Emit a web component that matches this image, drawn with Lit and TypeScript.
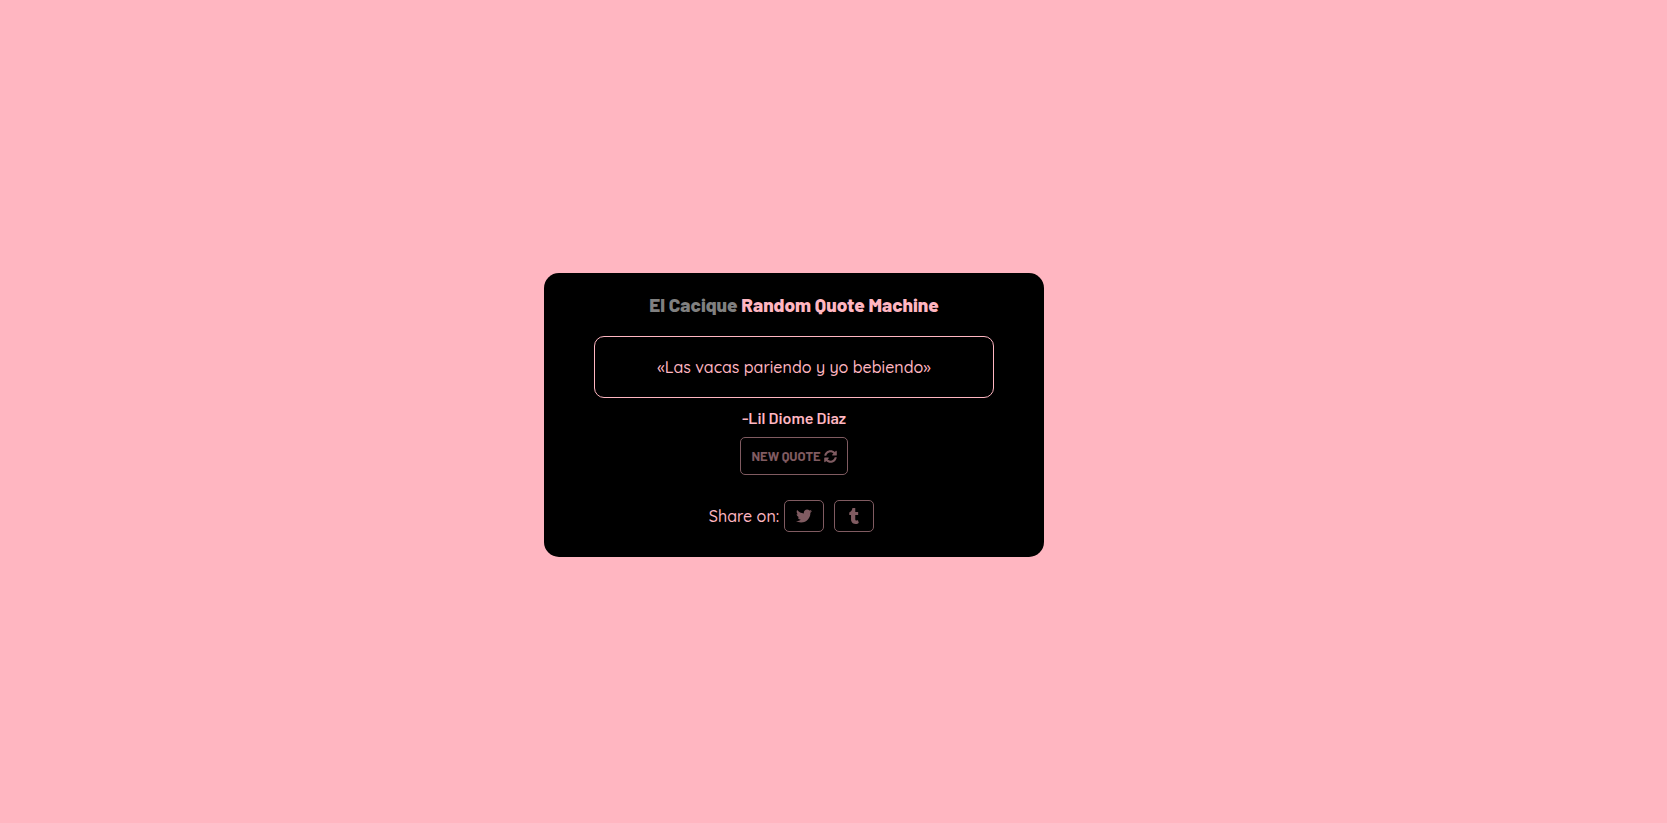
import { LitElement, html, css, svg } from "lit";
import { customElement, state } from "lit/decorators.js";

interface Quote {
  text: string;
  author: string;
}

const QUOTES: Quote[] = [
  { text: "Las vacas pariendo y yo bebiendo", author: "Lil Diome Diaz" },
];

const syncIcon = svg`<path d="M370.72 133.28C339.458 104.008 298.888 87.962 255.848 88c-77.458.068-144.328 53.178-162.791 126.85-1.344 5.363-6.122 9.15-11.651 9.15H24.103c-7.498 0-13.194-6.807-11.807-14.176C33.933 94.924 134.813 8 256 8c66.448 0 126.791 26.136 171.315 68.685L463.03 40.97C478.149 25.851 504 36.559 504 57.941V192c0 13.255-10.745 24-24 24H345.941c-21.382 0-32.09-25.851-16.971-40.971l41.75-41.749zM32 296h134.059c21.382 0 32.09 25.851 16.971 40.971l-41.75 41.75c31.262 29.273 71.835 45.319 114.876 45.28 77.418-.07 144.315-53.144 162.787-126.849 1.344-5.363 6.122-9.15 11.651-9.15h57.304c7.498 0 13.194 6.807 11.807 14.176C478.067 417.076 377.187 504 256 504c-66.448 0-126.791-26.136-171.315-68.685L48.97 471.03C33.851 486.149 8 475.441 8 454.059V320c0-13.255 10.745-24 24-24z"/>`;

const twitterIcon = svg`<path d="M459.37 151.716c.325 4.548.325 9.097.325 13.645 0 138.72-105.583 298.558-298.558 298.558-59.452 0-114.68-17.219-161.137-47.106 8.447.974 16.568 1.299 25.34 1.299 49.055 0 94.213-16.568 130.274-44.832-46.132-.975-84.792-31.188-98.112-72.772 6.498.974 12.995 1.624 19.818 1.624 9.421 0 18.843-1.3 27.614-3.573-48.081-9.747-84.143-51.98-84.143-102.985v-1.299c13.969 7.797 30.214 12.67 47.431 13.319-28.264-18.843-46.781-51.005-46.781-87.391 0-19.492 5.197-37.36 14.294-52.954 51.655 63.675 129.3 105.258 216.365 109.807-1.624-7.797-2.599-15.918-2.599-24.04 0-57.828 46.782-104.934 104.934-104.934 30.213 0 57.502 12.67 76.67 33.137 23.715-4.548 46.456-13.32 66.599-25.34-7.798 24.366-24.366 44.833-46.132 57.827 21.117-2.273 41.584-8.122 60.426-16.243-14.292 20.791-32.161 39.308-52.628 54.253z"/>`;

const tumblrIcon = svg`<path d="M309.8 480.3c-13.6 14.5-50 31.7-97.4 31.7-120.8 0-147-88.8-147-140.6v-144H17.9c-5.5 0-10-4.5-10-10v-68c0-7.2 4.5-13.6 11.3-16 62-21.8 81.5-76 84.3-117.1.8-11 6.5-16.3 16.1-16.3h70.9c5.5 0 10 4.5 10 10v115.2h83c5.5 0 10 4.4 10 9.9v81.7c0 5.5-4.5 10-10 10h-83.4V360c0 34.2 23.7 53.6 68 35.8 4.8-1.9 9-3.2 12.7-2.2 3.5.9 5.8 3.4 7.4 7.9l22 64.3c1.8 5 3.3 10.6-.4 14.5z"/>`;

@customElement("app-root")
export class AppRoot extends LitElement {
  static styles = css`
    :host {
      display: grid;
      place-items: center;
      box-sizing: border-box;
      min-height: 100vh;
      padding: 7px 79px 0 0;
      background: #ffb6c1;
      color: #ffb6c1;
      font-family: Quicksand, Inter, sans-serif;
      font-size: 16px;
      font-weight: 500;
      line-height: 20px;
    }
    .card {
      box-sizing: border-box;
      width: 100%;
      max-width: 500px;
      padding: 20px 50px 25px;
      border-radius: 15px;
      background: #000;
      display: flex;
      flex-direction: column;
      align-items: center;
      text-align: center;
    }
    .title {
      margin: 0 0 19px;
      font: 800 19px/24px Barlow, Roboto, sans-serif;
    }
    .owner {
      color: #808080;
    }
    .quote {
      box-sizing: border-box;
      width: 100%;
      margin: 0;
      padding: 20px;
      border: 1px solid;
      border-radius: 10px;
    }
    .author {
      margin: 10px 0 9px;
      font: 600 16px/20px Barlow, Roboto, sans-serif;
    }
    .btn {
      box-sizing: border-box;
      display: inline-flex;
      align-items: center;
      justify-content: center;
      gap: 3px;
      border: 1px solid;
      border-radius: 5px;
      background: none;
      color: inherit;
      opacity: 0.5;
      cursor: pointer;
      text-decoration: none;
    }
    .btn:hover {
      opacity: 1;
    }
    .new {
      height: 38px;
      padding: 0 10px;
      font: 700 13px/16px Barlow, Roboto, sans-serif;
    }
    .share {
      display: flex;
      align-items: center;
      gap: 10px;
      margin-top: 25px;
      padding-right: 5px;
    }
    .first {
      display: flex;
      align-items: center;
      gap: 5px;
    }
    .social {
      width: 40px;
      height: 32px;
    }
    svg {
      display: block;
      fill: currentColor;
    }
  `;

  @state() private index = 0;

  private next() {
    this.index = (this.index + 1) % QUOTES.length;
  }

  render() {
    const quote = QUOTES[this.index];
    return html`
      <main class="card">
        <h1 class="title"><span class="owner">El Cacique</span> Random Quote Machine</h1>
        <p class="quote">«${quote.text}»</p>
        <p class="author">-${quote.author}</p>
        <button class="btn new" type="button" @click=${this.next}>
          NEW QUOTE
          <svg width="13" height="13" viewBox="0 0 512 512" aria-hidden="true">${syncIcon}</svg>
        </button>
        <div class="share">
          <div class="first">
            <span>Share on:</span>
            <a class="btn social" href="#twitter" aria-label="Twitter">
              <svg width="16" height="16" viewBox="0 0 512 512" aria-hidden="true">${twitterIcon}</svg>
            </a>
          </div>
          <a class="btn social" href="#tumblr" aria-label="Tumblr">
            <svg width="10" height="16" viewBox="0 0 320 512" aria-hidden="true">${tumblrIcon}</svg>
          </a>
        </div>
      </main>
    `;
  }
}
